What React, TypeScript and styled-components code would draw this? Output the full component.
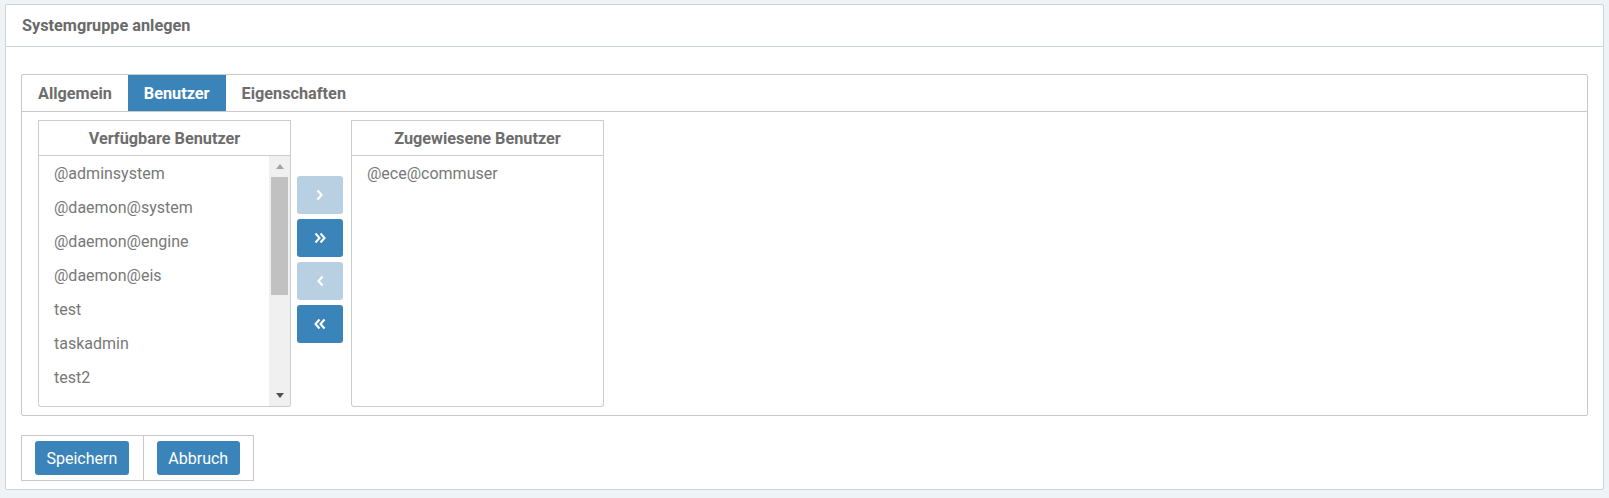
import styled, { createGlobalStyle } from "styled-components";

const GlobalStyle = createGlobalStyle`
  html, body {
    margin: 0;
    padding: 0;
    background: #eef3f7;
  }
  body {
    font-family: Roboto, "Liberation Sans", Arial, sans-serif;
  }
  * {
    box-sizing: border-box;
  }
`;

const Page = styled.div`
  padding: 4px 5px 8px 5px;
`;

const Panel = styled.div`
  background: #fff;
  border: 1px solid #ccd3d9;
  border-radius: 2px;
`;

const PanelHeader = styled.div`
  height: 42px;
  padding: 0 16px;
  display: flex;
  align-items: center;
  border-bottom: 1px solid #ccd3d9;
  font-size: 16.25px;
  font-weight: 700;
  color: #6a6a6a;
`;

const PanelBody = styled.div`
  padding: 27px 15px 8px 15px;
`;

const TabBox = styled.div`
  border: 1px solid #c9c9c9;
  border-radius: 2px;
`;

const TabBar = styled.div`
  display: flex;
  height: 37px;
  border-bottom: 1px solid #c9c9c9;
`;

const Tab = styled.div<{ $active?: boolean }>`
  display: flex;
  align-items: center;
  padding: 1px 16px 0 16px;
  font-size: 16.25px;
  font-weight: 700;
  color: ${(p) => (p.$active ? "#ffffff" : "#6d6d6d")};
  background: ${(p) => (p.$active ? "#3a84ba" : "transparent")};
`;

const TabContent = styled.div`
  padding: 8px 16px;
`;

const DualList = styled.div`
  display: flex;
  align-items: flex-start;
`;

const ListColumn = styled.div`
  width: 253px;
  display: flex;
  flex-direction: column;
`;

const ListHeader = styled.div`
  height: 36px;
  display: flex;
  align-items: center;
  justify-content: center;
  border: 1px solid #cccccc;
  font-size: 16.25px;
  font-weight: 700;
  color: #6d6d6d;
`;

const ListBox = styled.div`
  height: 251px;
  display: flex;
  border: 1px solid #cccccc;
  border-top: none;
  border-radius: 0 0 3px 3px;
  overflow: hidden;
`;

const Items = styled.div`
  flex: 1;
  padding-top: 1px;
  overflow: hidden;
`;

const Item = styled.div`
  height: 34px;
  line-height: 34px;
  padding-left: 15px;
  font-size: 16px;
  color: #787878;
  white-space: nowrap;
`;

const Scrollbar = styled.div`
  width: 21px;
  display: flex;
  flex-direction: column;
  background: #f0f0f0;
`;

const ScrollArrow = styled.div<{ $down?: boolean }>`
  height: 21px;
  display: flex;
  align-items: center;
  justify-content: center;

  &::before {
    content: "";
    border-left: 4.5px solid transparent;
    border-right: 4.5px solid transparent;
    ${(p) =>
      p.$down
        ? "border-top: 5px solid #505050;"
        : "border-bottom: 5px solid #a3a3a3;"}
  }
`;

const ScrollTrack = styled.div`
  flex: 1;
  padding: 0 2px;
`;

const ScrollThumb = styled.div`
  height: 118px;
  background: #c1c1c1;
`;

const MoveColumn = styled.div`
  width: 46px;
  margin: 56px 8px 0 6px;
  display: flex;
  flex-direction: column;
  gap: 5px;
`;

const MoveButton = styled.button<{ $disabled?: boolean }>`
  height: 38px;
  border: none;
  border-radius: 3px;
  padding: 0;
  display: flex;
  align-items: center;
  justify-content: center;
  background: ${(p) => (p.$disabled ? "#b9d0e2" : "#3a84ba")};
  cursor: ${(p) => (p.$disabled ? "default" : "pointer")};
`;

const ButtonBar = styled.div`
  display: inline-flex;
  margin-top: 19px;
  border: 1px solid #c9c9c9;
`;

const ButtonCell = styled.div`
  padding: 5px 13px 5px 13px;

  &:not(:last-child) {
    border-right: 1px solid #c9c9c9;
    padding-right: 14px;
  }
`;

const ActionButton = styled.button`
  height: 34px;
  padding: 0 11.5px;
  border: none;
  border-radius: 3px;
  background: #3a84ba;
  color: #ffffff;
  font-family: Roboto, "Liberation Sans", Arial, sans-serif;
  font-size: 16px;
  cursor: pointer;
`;

const Chevron = ({ double, left }: { double?: boolean; left?: boolean }) => {
  const w = double ? 12 : 8;
  return (
    <svg
      width={w}
      height={12}
      viewBox={`0 0 ${w} 12`}
      style={left ? { transform: "scaleX(-1)" } : undefined}
    >
      <polyline
        points="1.5,1.5 5.5,6 1.5,10.5"
        fill="none"
        stroke="#ffffff"
        strokeWidth={2.1}
      />
      {double && (
        <polyline
          points="6.5,1.5 10.5,6 6.5,10.5"
          fill="none"
          stroke="#ffffff"
          strokeWidth={2.1}
        />
      )}
    </svg>
  );
};

const available = [
  "@adminsystem",
  "@daemon@system",
  "@daemon@engine",
  "@daemon@eis",
  "test",
  "taskadmin",
  "test2",
];

const assigned = ["@ece@commuser"];

export default function App() {
  return (
    <>
      <GlobalStyle />
      <Page>
        <Panel>
          <PanelHeader>Systemgruppe anlegen</PanelHeader>
          <PanelBody>
            <TabBox>
              <TabBar>
                <Tab>Allgemein</Tab>
                <Tab $active>Benutzer</Tab>
                <Tab>Eigenschaften</Tab>
              </TabBar>
              <TabContent>
                <DualList>
                  <ListColumn>
                    <ListHeader>Verfügbare Benutzer</ListHeader>
                    <ListBox>
                      <Items>
                        {available.map((u) => (
                          <Item key={u}>{u}</Item>
                        ))}
                      </Items>
                      <Scrollbar>
                        <ScrollArrow />
                        <ScrollTrack>
                          <ScrollThumb />
                        </ScrollTrack>
                        <ScrollArrow $down />
                      </Scrollbar>
                    </ListBox>
                  </ListColumn>
                  <MoveColumn>
                    <MoveButton $disabled>
                      <Chevron />
                    </MoveButton>
                    <MoveButton>
                      <Chevron double />
                    </MoveButton>
                    <MoveButton $disabled>
                      <Chevron left />
                    </MoveButton>
                    <MoveButton>
                      <Chevron double left />
                    </MoveButton>
                  </MoveColumn>
                  <ListColumn>
                    <ListHeader>Zugewiesene Benutzer</ListHeader>
                    <ListBox>
                      <Items>
                        {assigned.map((u) => (
                          <Item key={u}>{u}</Item>
                        ))}
                      </Items>
                    </ListBox>
                  </ListColumn>
                </DualList>
              </TabContent>
            </TabBox>
            <ButtonBar>
              <ButtonCell>
                <ActionButton>Speichern</ActionButton>
              </ButtonCell>
              <ButtonCell>
                <ActionButton>Abbruch</ActionButton>
              </ButtonCell>
            </ButtonBar>
          </PanelBody>
        </Panel>
      </Page>
    </>
  );
}
